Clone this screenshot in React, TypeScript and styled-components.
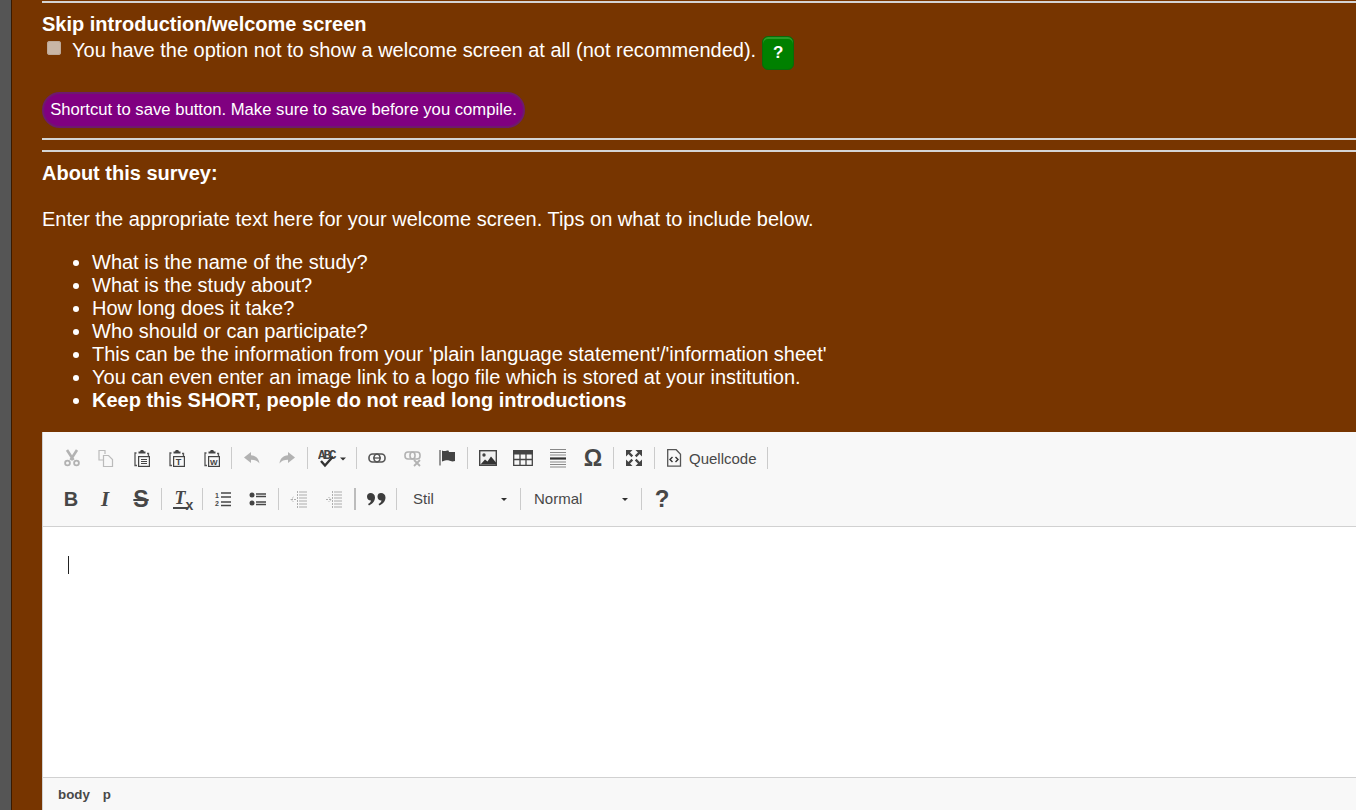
import React from 'react';
import styled, { createGlobalStyle } from 'styled-components';

const GlobalStyle = createGlobalStyle`
  html, body {
    margin: 0;
    padding: 0;
    height: 100%;
    overflow: hidden;
    background: #773500;
  }
`;

const Page = styled.div`
  display: flex;
  width: 1356px;
  height: 810px;
  overflow: hidden;
  font-family: "Liberation Sans", Arial, sans-serif;
  color: #fff;
`;

const SideStrip = styled.div`
  width: 11px;
  flex: none;
  background: #555555;
  border-right: 1px solid #3a1a00;
`;

const Content = styled.main`
  flex: 1;
  min-width: 0;
  background: #773500;
  padding: 1px 0 0 30px;
  display: flex;
  flex-direction: column;
`;

const Rule = styled.hr<{ $gap?: number }>`
  width: 100%;
  height: 2px;
  margin: ${p => p.$gap ?? 0}px 0 0;
  border: none;
  background: #d4d4d4;
  flex: none;
`;

const Heading = styled.div<{ $top: number }>`
  font-size: 20px;
  line-height: 23px;
  font-weight: bold;
  margin-top: ${p => p.$top}px;
`;

const OptionRow = styled.div`
  display: flex;
  align-items: flex-start;
  height: 34px;
`;

const Check = styled.span`
  width: 14px;
  height: 14px;
  margin: 5px 0 0 5px;
  border-radius: 3px;
  background: #c9b6a6;
  box-shadow: inset 0 0 0 1px #bda998;
  flex: none;
`;

const OptionText = styled.span`
  font-size: 20px;
  line-height: 23px;
  margin: 3px 0 0 11px;
`;

const HelpButton = styled.span`
  width: 32px;
  height: 34px;
  margin-left: 6px;
  box-sizing: border-box;
  background: #008000;
  border: 1px solid #0a6a0a;
  box-shadow: inset 0 2px 0 #2a9a2a;
  border-radius: 6px;
  color: #fff;
  font-size: 17px;
  font-weight: bold;
  display: flex;
  align-items: center;
  justify-content: center;
  flex: none;
`;

const SaveButton = styled.button`
  align-self: flex-start;
  margin-top: 22px;
  height: 36px;
  width: 483px;
  padding: 0;
  box-sizing: border-box;
  border: 2px solid #6d1a6d;
  border-radius: 18px;
  background: #800080;
  color: #fff;
  font-family: inherit;
  font-size: 16.67px;
  white-space: nowrap;
`;

const Paragraph = styled.p`
  margin: 23px 0 0;
  font-size: 20px;
  line-height: 23px;
`;

const TipList = styled.ul`
  margin: 20px 0 0;
  padding: 0 0 0 50px;
  font-size: 20px;
  line-height: 23px;
`;

const Strong = styled.li`
  font-weight: bold;
`;

const Editor = styled.section`
  margin-top: 20px;
  flex: 1;
  min-height: 0;
  display: flex;
  flex-direction: column;
  background: #fff;
  border-left: 1px solid #d1d1d1;
`;

const Toolbar = styled.div`
  height: 88px;
  flex: none;
  background: #f8f8f8;
  border-bottom: 1px solid #d1d1d1;
  padding: 6px 0 0 12px;
  display: flex;
  flex-direction: column;
  gap: 1px;
`;

const ToolRow = styled.div`
  display: flex;
  align-items: center;
  height: 40px;
`;

const ToolButton = styled.span<{ $w?: number }>`
  width: ${p => p.$w ?? 35}px;
  height: 40px;
  flex: none;
  display: flex;
  align-items: center;
  justify-content: center;
  color: #474747;
`;

const SourceButton = styled.span`
  width: 112px;
  height: 40px;
  flex: none;
  display: flex;
  align-items: center;
  padding-left: 11px;
  box-sizing: border-box;
`;

const Sep = styled.span<{ $thick?: boolean; $ml?: number }>`
  width: ${p => (p.$thick ? 2 : 1)}px;
  height: 22px;
  flex: none;
  margin-left: ${p => p.$ml ?? 0}px;
  background: ${p => (p.$thick ? '#bcbcbc' : '#cbcbcb')};
`;

const SourceLabel = styled.span`
  font-size: 15px;
  color: #484848;
  margin-left: 7px;
`;

const Combo = styled.div<{ $w: number; $pl: number }>`
  width: ${p => p.$w}px;
  height: 40px;
  flex: none;
  display: flex;
  align-items: center;
  justify-content: space-between;
  box-sizing: border-box;
  padding: 0 13px 2px ${p => p.$pl}px;
  font-size: 15px;
  color: #484848;
`;

const Caret = styled.span`
  width: 0;
  height: 0;
  margin-top: 2px;
  border-left: 3px solid transparent;
  border-right: 3px solid transparent;
  border-top: 3px solid #2f2f2f;
`;

const Glyph = styled.span<{ $size: number; $serif?: boolean; $italic?: boolean; $strike?: boolean }>`
  font-family: ${p => (p.$serif ? '"Liberation Serif", serif' : 'inherit')};
  font-size: ${p => p.$size}px;
  font-weight: bold;
  font-style: ${p => (p.$italic ? 'italic' : 'normal')};
  text-decoration: ${p => (p.$strike ? 'line-through' : 'none')};
  color: #474747;
  line-height: 1;
`;

const ClearGlyph = styled(Glyph)`
  position: relative;
  border-bottom: 2px solid #474747;
  padding: 0 2px;
  margin-right: 4px;
  & > sub {
    position: absolute;
    left: 100%;
    bottom: -5px;
    margin-left: -2px;
    font-family: "Liberation Sans", sans-serif;
    font-size: 14px;
    font-style: normal;
  }
`;

const EditArea = styled.div`
  flex: 1;
  padding: 29px 0 0 25px;
`;

const TextCursor = styled.div`
  width: 1px;
  height: 18px;
  background: #222;
`;

const PathBar = styled.div`
  height: 32px;
  flex: none;
  background: #f8f8f8;
  border-top: 1px solid #d1d1d1;
  display: flex;
  align-items: center;
  gap: 13px;
  padding-left: 15px;
  font-size: 13.33px;
  font-weight: bold;
  color: #484848;
`;

const Ico = ({ w = 18, h = 18, o = 1, children }: { w?: number; h?: number; o?: number; children: React.ReactNode }) => (
  <svg width={w} height={h} viewBox={`0 0 ${w} ${h}`} opacity={o} fill="none">{children}</svg>
);

const Clip = ({ children }: { children: React.ReactNode }) => (
  <Ico>
    <path d="M3.5 4H2v12.5h2" stroke="#555" strokeWidth="1.3" />
    <path d="M5.5 4.5V2.5H7l.8-1.5h2.4l.8 1.5h1.500v2z" fill="#444" />
    <path d="M14 4.500h1.500V7" stroke="#555" strokeWidth="1.300" />
    <rect x="5.600" y="7.600" width="10.800" height="9.800" stroke="#444" strokeWidth="1.200" />
    {children}
  </Ico>
);

export default function App() {
  return (
    <Page>
      <GlobalStyle />
      <SideStrip />
      <Content>
        <Rule />
        <Heading $top={10}>Skip introduction/welcome screen</Heading>
        <OptionRow>
          <Check />
          <OptionText>You have the option not to show a welcome screen at all (not recommended).</OptionText>
          <HelpButton>?</HelpButton>
        </OptionRow>
        <SaveButton>Shortcut to save button. Make sure to save before you compile.</SaveButton>
        <Rule $gap={10} />
        <Rule $gap={10} />
        <Heading $top={10}>About this survey:</Heading>
        <Paragraph>Enter the appropriate text here for your welcome screen. Tips on what to include below.</Paragraph>
        <TipList>
          <li>What is the name of the study?</li>
          <li>What is the study about?</li>
          <li>How long does it take?</li>
          <li>Who should or can participate?</li>
          <li>This can be the information from your 'plain language statement'/'information sheet'</li>
          <li>You can even enter an image link to a logo file which is stored at your institution.</li>
          <Strong>Keep this SHORT, people do not read long introductions</Strong>
        </TipList>
        <Editor>
          <Toolbar>
            <ToolRow>
              <ToolButton $w={34}>
                <Ico o={0.35}>
                  <path d="M4 1l6.500 10M14 1L7.500 11" stroke="#333" strokeWidth="2.600" />
                  <circle cx="4.500" cy="14" r="2.400" stroke="#333" strokeWidth="1.800" />
                  <circle cx="13.500" cy="14" r="2.400" stroke="#333" strokeWidth="1.800" />
                </Ico>
              </ToolButton>
              <ToolButton $w={34}>
                <Ico o={0.3}>
                  <path d="M8 5V1.500H2V11h4" stroke="#333" strokeWidth="1.200" />
                  <path d="M6.500 6.500h5l4 4v7h-9z" stroke="#333" strokeWidth="1.200" />
                </Ico>
              </ToolButton>
              <ToolButton $w={37}>
                <Clip><path d="M8 10.500h6M8 12.500h6M8 14.500h6" stroke="#444" strokeWidth="1.100" /></Clip>
              </ToolButton>
              <ToolButton $w={33}>
                <Clip><text x="7.700" y="16" fontFamily="Liberation Sans" fontSize="9" fontWeight="bold" fill="#444">T</text></Clip>
              </ToolButton>
              <ToolButton $w={38}>
                <Clip><text x="7" y="15.500" fontFamily="Liberation Sans" fontSize="8" fontWeight="bold" fill="#444">W</text></Clip>
              </ToolButton>
              <Sep />
              <ToolButton $w={40}>
                <Ico o={0.35}>
                  <path d="M8 3L1 8.500 8 14v-3.300c4 0 6.500 1 8.500 3.800C16 9.500 13 6.800 8 6.300z" fill="#333" />
                </Ico>
              </ToolButton>
              <ToolButton $w={30}>
                <Ico o={0.35}>
                  <path d="M10 3l7 5.500L10 14v-3.300c-4 0-6.500 1-8.500 3.800C2 9.500 5 6.800 10 6.300z" fill="#333" />
                </Ico>
              </ToolButton>
              <Sep $ml={5} />
              <ToolButton $w={48}>
                <Ico w={29} h={20}>
                  <text x="0" y="10.500" fontFamily="Liberation Mono, monospace" fontSize="12.500" fontWeight="bold" fill="#444" letterSpacing="-2">ABC</text>
                  <path d="M3 13l4 4.500 8-9" stroke="#333" strokeWidth="2.400" />
                  <path d="M22 9.500h6l-3 3z" fill="#333" />
                </Ico>
              </ToolButton>
              <Sep />
              <ToolButton $w={40}>
                <Ico h={12}>
                  <rect x="1" y="2" width="11" height="8" rx="3.500" stroke="#555" strokeWidth="1.600" />
                  <rect x="6" y="2" width="11" height="8" rx="3.500" stroke="#555" strokeWidth="1.600" />
                  <path d="M5 6h8" stroke="#555" strokeWidth="1.300" />
                </Ico>
              </ToolButton>
              <ToolButton $w={32}>
                <Ico o={0.35}>
                  <rect x="1" y="3" width="10" height="7" rx="3" stroke="#333" strokeWidth="1.600" />
                  <rect x="6" y="3" width="10" height="7" rx="3" stroke="#333" strokeWidth="1.600" />
                  <path d="M10 11l6 6M16 11l-6 6" stroke="#333" strokeWidth="1.800" />
                </Ico>
              </ToolButton>
              <ToolButton $w={36}>
                <Ico>
                  <path d="M2 1v15.500" stroke="#777" strokeWidth="1.500" />
                  <path d="M4 1.500c3 1.500 5-.5 6.500 0L11 3h6v9c-3 1-4.500 0-6-.5-2-.5-4 0-7 1z" fill="#444" />
                </Ico>
              </ToolButton>
              <Sep $ml={2} />
              <ToolButton $w={40}>
                <Ico h={16}>
                  <rect x="0.700" y="0.700" width="16.600" height="14.600" stroke="#444" strokeWidth="1.400" fill="#f0f0f0" />
                  <circle cx="5" cy="5" r="1.700" fill="#444" />
                  <path d="M1.500 14.500l4.500-5 2.500 2 3.500-5 5 6v2z" fill="#333" />
                </Ico>
              </ToolButton>
              <ToolButton $w={30}>
                <Ico w={20} h={16}>
                  <rect x="0" y="0" width="20" height="4.500" fill="#444" />
                  <path d="M.7 4v11.300h18.600V4M7 4v11M13 4v11M1 9.500h18" stroke="#444" strokeWidth="1.300" />
                </Ico>
              </ToolButton>
              <ToolButton $w={40}>
                <Ico h={20}>
                  <path d="M1 1.500h16M1 4.500h16M1 7h16M1 14h16M1 16.500h16M1 19h16" stroke="#888" strokeWidth="1" />
                  <path d="M1 10.500h16" stroke="#333" strokeWidth="2.200" />
                </Ico>
              </ToolButton>
              <ToolButton $w={30}>
                <Glyph $size={23}>Ω</Glyph>
              </ToolButton>
              <Sep $ml={5} />
              <ToolButton $w={40}>
                <Ico>
                  <path d="M1 1h6.500L1 7.500zM17 1v6.500L10.500 1zM1 17v-6.500L7.500 17zM17 17h-6.500L17 10.500z" fill="#444" />
                  <path d="M3 3l4.300 4.300M15 3l-4.300 4.300M3 15l4.300-4.300M15 15l-4.300-4.300" stroke="#444" strokeWidth="2.400" />
                </Ico>
              </ToolButton>
              <Sep />
              <SourceButton>
                <Ico w={16}>
                  <path d="M1.700.7h8.500l4.300 4.500v12H1.700z" stroke="#555" strokeWidth="1.300" />
                  <path d="M6.500 8L4 10.500 6.500 13M9.500 8l2.500 2.500L9.500 13" stroke="#333" strokeWidth="1.400" />
                </Ico>
                <SourceLabel>Quellcode</SourceLabel>
              </SourceButton>
              <Sep />
            </ToolRow>
            <ToolRow>
              <ToolButton $w={32}>
                <Glyph $size={20}>B</Glyph>
              </ToolButton>
              <ToolButton $w={36}>
                <Glyph $size={21} $serif $italic>I</Glyph>
              </ToolButton>
              <ToolButton $w={36}>
                <Glyph $size={23} $strike>S</Glyph>
              </ToolButton>
              <Sep $ml={2} />
              <ToolButton $w={40}>
                <ClearGlyph $size={18} $serif $italic>T<sub>x</sub></ClearGlyph>
              </ToolButton>
              <Sep />
              <ToolButton $w={40}>
                <Ico>
                  <path d="M7 3h10M7 7h10M7 12h10M7 15.500h10" stroke="#474747" strokeWidth="1.600" />
                  <text x="1" y="8" fontFamily="Liberation Sans" fontSize="7" fontWeight="bold" fill="#474747">1</text>
                  <text x="1" y="16" fontFamily="Liberation Sans" fontSize="7" fontWeight="bold" fill="#474747">2</text>
                </Ico>
              </ToolButton>
              <ToolButton $w={30}>
                <Ico h={14}>
                  <circle cx="3" cy="3" r="2.500" fill="#444" />
                  <circle cx="3" cy="11" r="2.500" fill="#444" />
                  <path d="M7 2h10M7 4.500h10M7 10h10M7 12.500h10" stroke="#474747" strokeWidth="1.500" />
                </Ico>
              </ToolButton>
              <Sep $ml={5} />
              <ToolButton $w={40}>
                <Ico o={0.45}>
                  <path d="M9 2h8M9 5h8M9 8h8M9 11h8M9 14h8M9 17h8" stroke="#555" strokeWidth="1" />
                  <path d="M1 9.500h5M3.500 7L1 9.500 3.500 12M7.500 1v17" stroke="#555" strokeWidth="1" strokeDasharray="2 1" />
                </Ico>
              </ToolButton>
              <ToolButton $w={30}>
                <Ico o={0.45}>
                  <path d="M9 2h8M9 5h8M9 8h8M9 11h8M9 14h8M9 17h8" stroke="#555" strokeWidth="1" />
                  <path d="M1 9.500h5M3.500 7L6 9.500 3.500 12M7.500 1v17" stroke="#555" strokeWidth="1" strokeDasharray="2 1" />
                </Ico>
              </ToolButton>
              <Sep $thick $ml={5} />
              <ToolButton $w={40}>
                <Ico w={20} h={14}>
                  <path d="M4.500 1C7 1 9 2.500 9 5.500 9 9 6.500 12 3 13.500L2 12c2-1 3-2.500 3-3.500C2.500 8.500 1 7 1 4.500 1 2.500 2.500 1 4.500 1zM15 1c2.500 0 4.500 1.500 4.500 4.500 0 3.500-2.500 6.500-6 8l-1-1.500c2-1 3-2.500 3-3.500-2.500 0-4-1.500-4-4S13 1 15 1z" fill="#3d3d3d" />
                </Ico>
              </ToolButton>
              <Sep />
              <Combo $w={123} $pl={16}>
                Stil
                <Caret />
              </Combo>
              <Sep />
              <Combo $w={120} $pl={13}>
                Normal
                <Caret />
              </Combo>
              <Sep />
              <ToolButton $w={40}>
                <Glyph $size={24}>?</Glyph>
              </ToolButton>
            </ToolRow>
          </Toolbar>
          <EditArea>
            <TextCursor />
          </EditArea>
          <PathBar>
            <span>body</span>
            <span>p</span>
          </PathBar>
        </Editor>
      </Content>
    </Page>
  );
}
